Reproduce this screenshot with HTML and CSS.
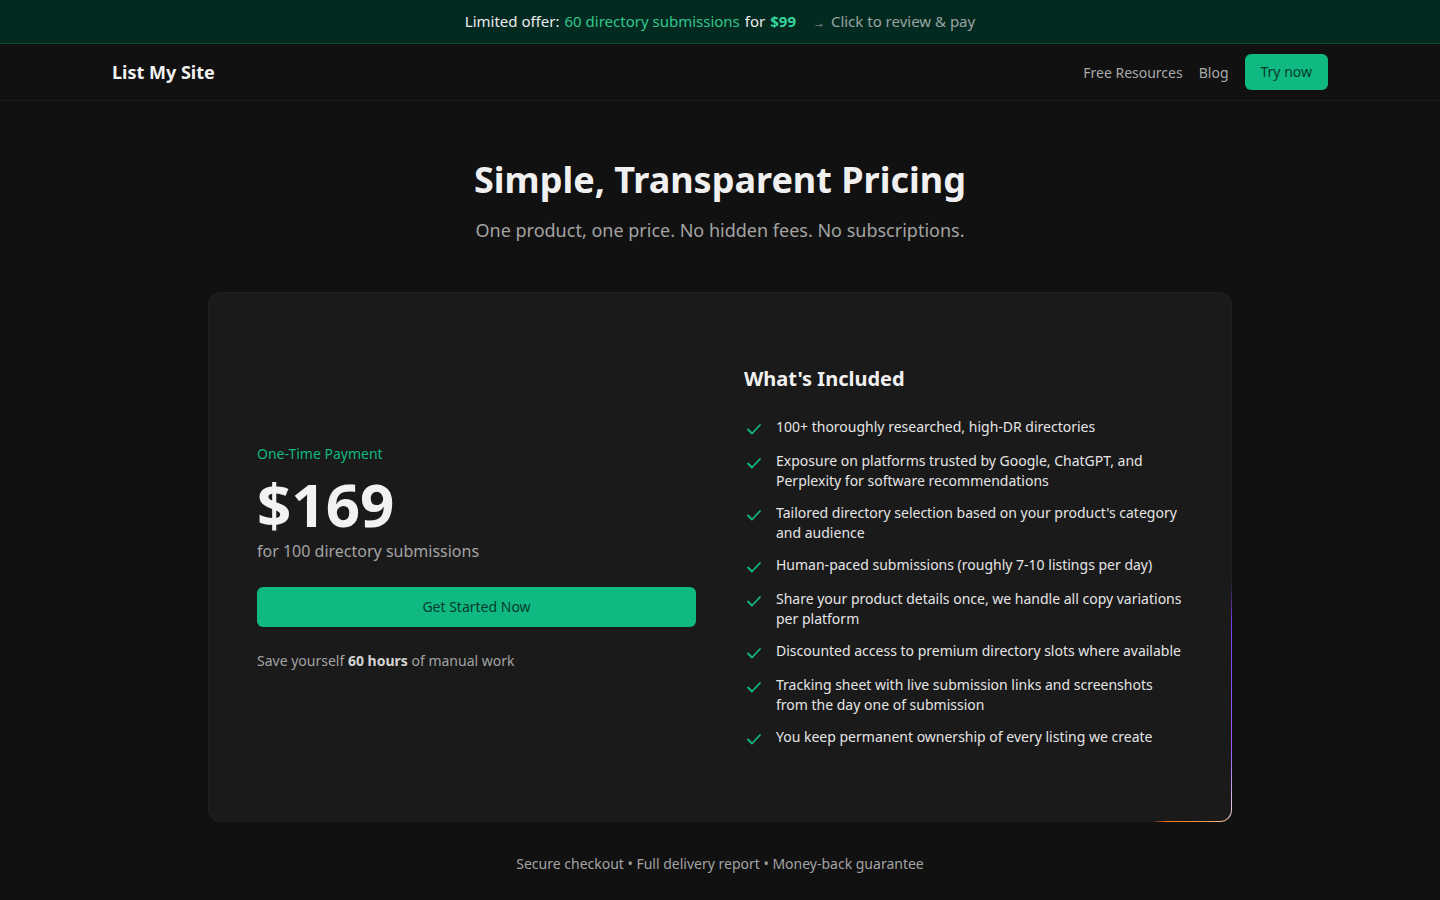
FILE: index.html
```html
<!DOCTYPE html>
<html lang="en">
    <head>
        <meta charset="UTF-8">
        <meta name="viewport" content="width=device-width, initial-scale=1.0">
        <title>Pricing - List My Site</title>
        <link rel="stylesheet" href="styles.css">
    </head>
    <body>
        <a class="offer-bar" href="#">
            <span class="offer-label">Limited offer:</span>
            <span class="offer-green">60 directory submissions</span>
            <span class="offer-label">for</span>
            <strong class="offer-price">$99</strong>
            <span class="offer-cta"><span class="offer-arrow">→</span> Click to review &amp; pay</span>
        </a>

        <header class="nav">
            <div class="nav-inner">
                <a class="logo" href="#">List My Site</a>
                <nav class="nav-links">
                    <a href="#">Free Resources</a>
                    <a href="#">Blog</a>
                    <a class="btn-try" href="#">Try now</a>
                </nav>
            </div>
        </header>

        <main class="pricing">
            <h1>Simple, Transparent Pricing</h1>
            <p class="subtitle">One product, one price. No hidden fees. No subscriptions.</p>

            <div class="card">
                <div class="glow"></div>
                <div class="card-left">
                    <div class="pay-type">One-Time Payment</div>
                    <div class="price">$169</div>
                    <div class="price-note">for 100 directory submissions</div>
                    <a class="btn-start" href="#">Get Started Now</a>
                    <p class="save">Save yourself <strong>60 hours</strong> of manual work</p>
                </div>
                <div class="card-right">
                    <h3>What's Included</h3>
                    <ul class="features">
                        <li><svg viewBox="0 0 20 20"><path d="M4 10.5l4 4 8-8.5"/></svg><span>100+ thoroughly researched, high-DR directories</span></li>
                        <li><svg viewBox="0 0 20 20"><path d="M4 10.5l4 4 8-8.5"/></svg><span>Exposure on platforms trusted by Google, ChatGPT, and Perplexity for software recommendations</span></li>
                        <li><svg viewBox="0 0 20 20"><path d="M4 10.5l4 4 8-8.5"/></svg><span>Tailored directory selection based on your product's category and audience</span></li>
                        <li><svg viewBox="0 0 20 20"><path d="M4 10.5l4 4 8-8.5"/></svg><span>Human-paced submissions (roughly 7-10 listings per day)</span></li>
                        <li><svg viewBox="0 0 20 20"><path d="M4 10.5l4 4 8-8.5"/></svg><span>Share your product details once, we handle all copy variations per platform</span></li>
                        <li><svg viewBox="0 0 20 20"><path d="M4 10.5l4 4 8-8.5"/></svg><span>Discounted access to premium directory slots where available</span></li>
                        <li><svg viewBox="0 0 20 20"><path d="M4 10.5l4 4 8-8.5"/></svg><span>Tracking sheet with live submission links and screenshots from the day one of submission</span></li>
                        <li><svg viewBox="0 0 20 20"><path d="M4 10.5l4 4 8-8.5"/></svg><span>You keep permanent ownership of every listing we create</span></li>
                    </ul>
                </div>
            </div>

            <p class="trust">Secure checkout • Full delivery report • Money-back guarantee</p>
        </main>
    </body>
</html>
```

FILE: styles.css
```css
* {
    box-sizing: border-box;
}
body {
    margin: 0;
    padding: 0;
    background-color: #111111;
    color: #e5e5e5;
    font-family: "Noto Sans", "Open Sans", sans-serif;
}
a {
    text-decoration: none;
    color: inherit;
}

/* top promo strip */
.offer-bar {
    display: flex;
    justify-content: center;
    align-items: center;
    gap: 5px;
    height: 44px;
    padding-bottom: 1px;
    background-color: #032a21;
    border-bottom: 1px solid #0d4a36;
    font-size: 15px;
}
.offer-label {
    color: #ececec;
}
.offer-green {
    color: #34c58c;
}
.offer-price {
    color: #34d399;
    font-weight: 700;
}
.offer-cta {
    margin-left: 12px;
    color: #9aa3a0;
}
.offer-arrow {
    font-size: 12px;
    margin-right: 2px;
}

/* navigation */
.nav {
    border-bottom: 1px solid #1a1a1a;
}
.nav-inner {
    max-width: 1280px;
    margin: 0 auto;
    padding: 0 32px;
    height: 56px;
    display: flex;
    align-items: center;
    justify-content: space-between;
}
.logo {
    font-size: 18px;
    font-weight: 700;
    color: #f2f2f2;
}
.nav-links {
    display: flex;
    align-items: center;
    gap: 16px;
    font-size: 14px;
}
.nav-links a {
    color: #a8a8a8;
}
.nav-links .btn-try {
    background-color: #10b981;
    color: #053b2c;
    padding: 8px 16px;
    border-radius: 6px;
    line-height: 20px;
}

/* pricing section */
.pricing {
    padding: 59px 24px 0;
    text-align: center;
}
.pricing h1 {
    margin: 0;
    font-size: 36px;
    line-height: 40px;
    font-weight: 700;
    color: #f0f0f0;
}
.subtitle {
    margin: 16px 0 0;
    font-size: 18px;
    line-height: 28px;
    color: #a3a3a3;
}

.card {
    position: relative;
    max-width: 1024px;
    margin: 48px auto 0;
    padding: 72px 48px;
    background-color: #1a1a1a;
    border: 1px solid #202020;
    border-radius: 12px;
    display: grid;
    grid-template-columns: 1fr 1fr;
    gap: 48px;
    align-items: center;
    text-align: left;
}

.glow {
    position: absolute;
    right: -1px;
    bottom: -1px;
    width: 13px;
    height: 13px;
    border-right: 1px solid #e9c6dc;
    border-bottom: 1px solid #f0b88c;
    border-bottom-right-radius: 12px;
    pointer-events: none;
}
.glow::before {
    content: "";
    position: absolute;
    right: -1px;
    bottom: 12px;
    width: 1px;
    height: 228px;
    background: linear-gradient(to bottom, rgba(124, 58, 237, 0), #7c3aed 18%, #9d5cf5 75%, #e2c4e6);
}
.glow::after {
    content: "";
    position: absolute;
    bottom: -1px;
    right: 12px;
    width: 66px;
    height: 1px;
    background: linear-gradient(to right, rgba(249, 115, 22, 0), #f97316 20%, #fb9a4b 80%, #f0b88c);
}

.pay-type {
    font-size: 14px;
    line-height: 20px;
    color: #10b981;
}
.price {
    margin-top: 10px;
    font-size: 60px;
    line-height: 60px;
    font-weight: 700;
    color: #f2f2f2;
}
.price-note {
    margin-top: 5px;
    font-size: 16px;
    line-height: 24px;
    color: #a3a3a3;
}
.btn-start {
    display: block;
    margin-top: 24px;
    height: 40px;
    line-height: 40px;
    text-align: center;
    background-color: #10b981;
    color: #053b2c;
    font-size: 14px;
    border-radius: 6px;
}
.save {
    margin: 24px 0 0;
    font-size: 14px;
    line-height: 20px;
    color: #a3a3a3;
}
.save strong {
    color: #d4d4d4;
}

.card-right h3 {
    margin: 0 0 24px;
    font-size: 20px;
    line-height: 28px;
    font-weight: 700;
    color: #f0f0f0;
}
.features {
    list-style: none;
    margin: 0;
    padding: 0;
    display: flex;
    flex-direction: column;
    gap: 12px;
}
.features li {
    display: flex;
    align-items: flex-start;
    gap: 12px;
    font-size: 14px;
    line-height: 20px;
    color: #e5e5e5;
}
.features svg {
    flex: none;
    width: 20px;
    height: 20px;
    margin-top: 2px;
    fill: none;
    stroke: #10b981;
    stroke-width: 1.8;
    stroke-linecap: round;
    stroke-linejoin: round;
}

.trust {
    margin: 32px 0 0;
    font-size: 14px;
    line-height: 20px;
    color: #a3a3a3;
}
```
